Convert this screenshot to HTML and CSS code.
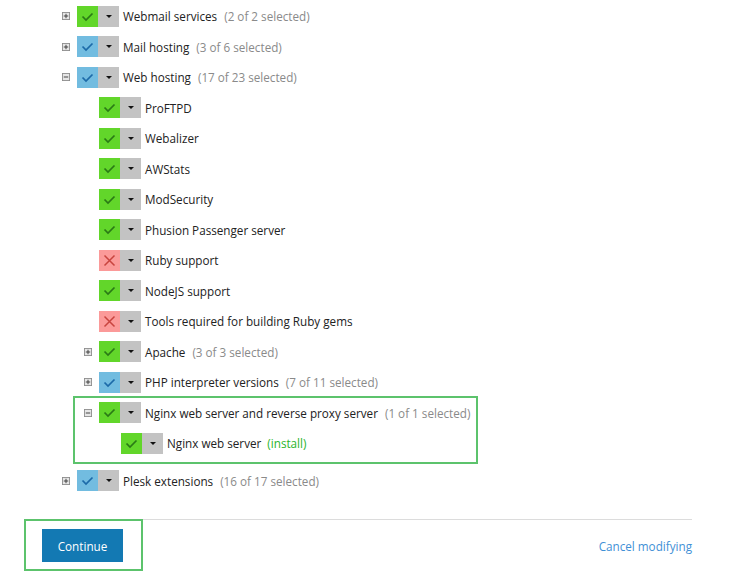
FILE: index.html
```html
<!DOCTYPE html>
<html lang="en">
<head>
    <meta charset="UTF-8">
    <title>Components</title>
    <link rel="stylesheet" href="styles.css">
</head>
<body>
    <svg width="0" height="0" class="defs">
        <symbol id="i-check" viewBox="0 0 21 21"><path d="M5.5 10.5l3.5 3.5 6.5-6.5" fill="none" stroke-width="1.7"/></symbol>
        <symbol id="i-cross" viewBox="0 0 21 21"><path d="M5.5 5.5l10 10M15.5 5.5l-10 10" fill="none" stroke-width="1.5"/></symbol>
        <symbol id="i-plus" viewBox="0 0 9 9"><rect x="0.5" y="0.5" width="8" height="8" fill="#e6e6e6" stroke="#8c8c8c"/><path d="M2 4.5h5M4.5 2v5" stroke="#333" stroke-width="1"/></symbol>
        <symbol id="i-minus" viewBox="0 0 9 9"><rect x="0.5" y="0.5" width="8" height="8" fill="#e6e6e6" stroke="#8c8c8c"/><path d="M2 4.5h5" stroke="#333" stroke-width="1"/></symbol>
    </svg>

    <ul class="tree">
        <li>
            <div class="row">
                <span class="expander"><svg><use href="#i-plus"/></svg></span>
                <span class="toggle on"><span class="state"><svg><use href="#i-check"/></svg></span><span class="caret"></span></span>
                <span class="label">Webmail services</span><span class="count">(2 of 2 selected)</span>
            </div>
        </li>
        <li>
            <div class="row">
                <span class="expander"><svg><use href="#i-plus"/></svg></span>
                <span class="toggle part"><span class="state"><svg><use href="#i-check"/></svg></span><span class="caret"></span></span>
                <span class="label">Mail hosting</span><span class="count">(3 of 6 selected)</span>
            </div>
        </li>
        <li>
            <div class="row">
                <span class="expander"><svg><use href="#i-minus"/></svg></span>
                <span class="toggle part"><span class="state"><svg><use href="#i-check"/></svg></span><span class="caret"></span></span>
                <span class="label">Web hosting</span><span class="count">(17 of 23 selected)</span>
            </div>
            <ul class="tree sub">
                <li><div class="row"><span class="expander"></span><span class="toggle on"><span class="state"><svg><use href="#i-check"/></svg></span><span class="caret"></span></span><span class="label">ProFTPD</span></div></li>
                <li><div class="row"><span class="expander"></span><span class="toggle on"><span class="state"><svg><use href="#i-check"/></svg></span><span class="caret"></span></span><span class="label">Webalizer</span></div></li>
                <li><div class="row"><span class="expander"></span><span class="toggle on"><span class="state"><svg><use href="#i-check"/></svg></span><span class="caret"></span></span><span class="label">AWStats</span></div></li>
                <li><div class="row"><span class="expander"></span><span class="toggle on"><span class="state"><svg><use href="#i-check"/></svg></span><span class="caret"></span></span><span class="label">ModSecurity</span></div></li>
                <li><div class="row"><span class="expander"></span><span class="toggle on"><span class="state"><svg><use href="#i-check"/></svg></span><span class="caret"></span></span><span class="label">Phusion Passenger server</span></div></li>
                <li><div class="row"><span class="expander"></span><span class="toggle off"><span class="state"><svg><use href="#i-cross"/></svg></span><span class="caret"></span></span><span class="label">Ruby support</span></div></li>
                <li><div class="row"><span class="expander"></span><span class="toggle on"><span class="state"><svg><use href="#i-check"/></svg></span><span class="caret"></span></span><span class="label">NodeJS support</span></div></li>
                <li><div class="row"><span class="expander"></span><span class="toggle off"><span class="state"><svg><use href="#i-cross"/></svg></span><span class="caret"></span></span><span class="label">Tools required for building Ruby gems</span></div></li>
                <li>
                    <div class="row">
                        <span class="expander"><svg><use href="#i-plus"/></svg></span>
                        <span class="toggle on"><span class="state"><svg><use href="#i-check"/></svg></span><span class="caret"></span></span>
                        <span class="label">Apache</span><span class="count">(3 of 3 selected)</span>
                    </div>
                </li>
                <li>
                    <div class="row">
                        <span class="expander"><svg><use href="#i-plus"/></svg></span>
                        <span class="toggle part"><span class="state"><svg><use href="#i-check"/></svg></span><span class="caret"></span></span>
                        <span class="label">PHP interpreter versions</span><span class="count">(7 of 11 selected)</span>
                    </div>
                </li>
                <li class="highlight">
                    <div class="row">
                        <span class="expander"><svg><use href="#i-minus"/></svg></span>
                        <span class="toggle on"><span class="state"><svg><use href="#i-check"/></svg></span><span class="caret"></span></span>
                        <span class="label">Nginx web server and reverse proxy server</span><span class="count">(1 of 1 selected)</span>
                    </div>
                    <ul class="tree sub">
                        <li><div class="row"><span class="expander"></span><span class="toggle on"><span class="state"><svg><use href="#i-check"/></svg></span><span class="caret"></span></span><span class="label">Nginx web server</span><span class="install">(install)</span></div></li>
                    </ul>
                </li>
            </ul>
        </li>
        <li>
            <div class="row">
                <span class="expander"><svg><use href="#i-plus"/></svg></span>
                <span class="toggle part"><span class="state"><svg><use href="#i-check"/></svg></span><span class="caret"></span></span>
                <span class="label">Plesk extensions</span><span class="count">(16 of 17 selected)</span>
            </div>
        </li>
    </ul>

    <div class="footer">
        <div class="btn-wrap">
            <button class="btn-primary">Continue</button>
        </div>
        <a href="#" class="cancel">Cancel modifying</a>
    </div>
</body>
</html>
```

FILE: styles.css
```css
body {
    margin: 0;
    padding-top: 1px;
    font-family: "Open Sans", "Noto Sans", sans-serif;
    font-size: 11.7px;
    color: #222;
    background: #fff;
}

.defs {
    position: absolute;
}

.tree {
    list-style: none;
    margin: 0;
    padding: 0 0 0 62px;
}

.tree.sub {
    padding-left: 22px;
}

.row {
    display: flex;
    align-items: center;
    height: 30.5px;
    white-space: nowrap;
}

.expander {
    width: 15px;
    flex: none;
    display: flex;
    align-items: center;
}

.expander svg {
    width: 8px;
    height: 8px;
}

.toggle {
    display: flex;
    height: 21px;
    margin-right: 4px;
}

.toggle .state {
    width: 21px;
    height: 21px;
}

.toggle .state svg {
    width: 21px;
    height: 21px;
    display: block;
}

.toggle.on .state {
    background: #62d62a;
    stroke: #2a7a16;
}

.toggle.part .state {
    background: #72bce0;
    stroke: #1c6aa8;
}

.toggle.off .state {
    background: #fb9a99;
    stroke: #c9443f;
}

.caret {
    width: 21px;
    height: 21px;
    background: #c3c3c3;
    position: relative;
}

.caret::after {
    content: "";
    position: absolute;
    left: 8px;
    top: 9px;
    border-left: 3px solid transparent;
    border-right: 3px solid transparent;
    border-top: 3px solid #111;
}

.count {
    color: #8a8a8a;
    margin-left: 7px;
}

.install {
    color: #2bb52b;
    margin-left: 6px;
}

.highlight {
    border: 2px solid #5cc36c;
    margin: -2px 0 2px -11px;
    padding: 0 6px 3px 9px;
    width: max-content;
}

.footer {
    display: flex;
    justify-content: space-between;
    align-items: center;
    margin: 23px 59px 0 24px;
    border-top: 1px solid #dcdcdc;
}

.btn-wrap {
    border: 2px solid #5cc36c;
    margin-top: -1px;
    padding: 8px 18px 7px 16px;
}

.btn-primary {
    display: block;
    width: 81px;
    height: 33px;
    border: none;
    background: #1379b3;
    color: #fff;
    font-family: "Open Sans", "Noto Sans", sans-serif;
    font-size: 11.7px;
    cursor: pointer;
}

.cancel {
    color: #3f90d6;
    text-decoration: none;
    font-size: 11.7px;
}
```
